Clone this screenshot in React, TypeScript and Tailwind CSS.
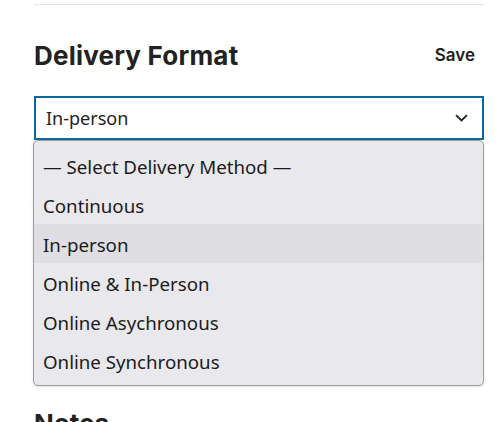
const options = [
  "— Select Delivery Method —",
  "Continuous",
  "In-person",
  "Online & In-Person",
  "Online Asychronous",
  "Online Synchronous",
];

export default function App() {
  const selected = "In-person";

  return (
    <div className="w-[504px] h-[422px] overflow-hidden bg-white pl-[34px] pr-[20px]">
      <div className="h-[5px] border-b border-[#e4e4e4]" />

      <div className="mt-[35px] flex items-center justify-between">
        <h2 className="text-[26px] leading-[32px] font-bold text-[#222] tracking-[0.2px]" style={{ fontFamily: "Inter, sans-serif" }}>
          Delivery Format
        </h2>
        <button className="mr-[9px] text-[17px] font-semibold text-[#222]" style={{ fontFamily: "Inter, sans-serif" }}>
          Save
        </button>
      </div>

      <div className="relative mt-[24px]" style={{ fontFamily: "'Noto Sans', sans-serif" }}>
        <div className="h-[44px] border-2 border-[#0a6a9e] flex items-center justify-between pl-[10px] pr-[14px] text-[18px] text-[#222]">
          <span>{selected}</span>
          <svg width="13" height="8" viewBox="0 0 13 8" fill="none">
            <path d="M1 1.2l5.5 5.3L12 1.2" stroke="#222" strokeWidth="1.8" />
          </svg>
        </div>

        <ul className="absolute left-[-1px] top-[44px] w-[451px] py-[5px] bg-[#e9e8ed] border border-[#9d9d9d] rounded-[5px] shadow-sm text-[18.7px] text-[#1b1b1b]">
          {options.map((o) => (
            <li
              key={o}
              className={`h-[39px] flex items-center pl-[9px] pt-[3px] ${o === selected ? "bg-[#dfdee3]" : ""}`}
            >
              {o}
            </li>
          ))}
        </ul>
      </div>

      <h2 className="mt-[264px] text-[26px] font-bold text-[#222]" style={{ fontFamily: "Inter, sans-serif" }}>
        Notes
      </h2>
    </div>
  );
}
